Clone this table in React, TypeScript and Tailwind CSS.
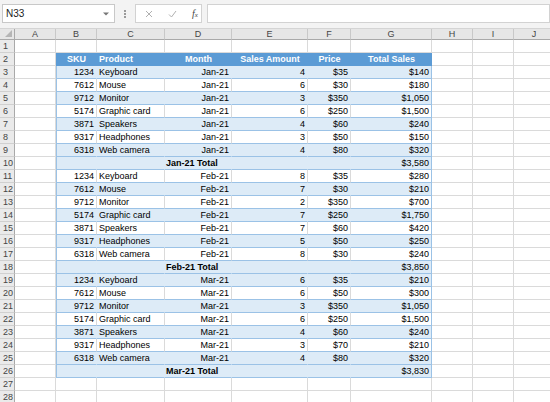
import React from "react";

type Row =
  | { kind: "empty" }
  | { kind: "head" }
  | { kind: "data"; sku: number; product: string; month: string; qty: number; price: string; total: string; band: boolean }
  | { kind: "total"; label: string; total: string };

const groups = [
  {
    month: "Jan-21",
    total: "$3,580",
    items: [
      [1234, "Keyboard", 4, "$35", "$140"],
      [7612, "Mouse", 6, "$30", "$180"],
      [9712, "Monitor", 3, "$350", "$1,050"],
      [5174, "Graphic card", 6, "$250", "$1,500"],
      [3871, "Speakers", 4, "$60", "$240"],
      [9317, "Headphones", 3, "$50", "$150"],
      [6318, "Web camera", 4, "$80", "$320"],
    ],
  },
  {
    month: "Feb-21",
    total: "$3,850",
    items: [
      [1234, "Keyboard", 8, "$35", "$280"],
      [7612, "Mouse", 7, "$30", "$210"],
      [9712, "Monitor", 2, "$350", "$700"],
      [5174, "Graphic card", 7, "$250", "$1,750"],
      [3871, "Speakers", 7, "$60", "$420"],
      [9317, "Headphones", 5, "$50", "$250"],
      [6318, "Web camera", 8, "$30", "$240"],
    ],
  },
  {
    month: "Mar-21",
    total: "$3,830",
    items: [
      [1234, "Keyboard", 6, "$35", "$210"],
      [7612, "Mouse", 6, "$50", "$300"],
      [9712, "Monitor", 3, "$350", "$1,050"],
      [5174, "Graphic card", 6, "$250", "$1,500"],
      [3871, "Speakers", 4, "$60", "$240"],
      [9317, "Headphones", 3, "$70", "$210"],
      [6318, "Web camera", 4, "$80", "$320"],
    ],
  },
] as const;

function buildRows(): Row[] {
  const rows: Row[] = [{ kind: "empty" }, { kind: "head" }];
  let n = 0;
  groups.forEach((g) => {
    g.items.forEach((it) => {
      rows.push({
        kind: "data",
        sku: it[0] as number,
        product: it[1] as string,
        month: g.month,
        qty: it[2] as number,
        price: it[3] as string,
        total: it[4] as string,
        band: n % 2 === 0,
      });
      n++;
    });
    rows.push({ kind: "total", label: `${g.month} Total`, total: g.total });
  });
  rows.push({ kind: "empty" }, { kind: "empty" });
  return rows;
}

const letters = ["A", "B", "C", "D", "E", "F", "G", "H", "I", "J"];

const grid = "grid grid-cols-[15px_41px_41px_68px_67px_76px_43px_81px_41px_41px_41px]";
const plain = "h-[13px] border-r border-b border-[#dadada] bg-white";

function RowNum({ n }: { n: number }) {
  return (
    <div className="h-[13px] border-r border-r-[#a9a9a9] border-b border-b-[#d0d0d0] bg-[#eaeaea] pl-[3px] text-[9px] leading-[12px] text-[#444]">
      {n}
    </div>
  );
}

function Blank() {
  return <div className={plain} />;
}

function Outside() {
  return (
    <>
      <Blank />
      <Blank />
      <Blank />
    </>
  );
}

function SheetRow({ row, n }: { row: Row; n: number }) {
  if (row.kind === "empty") {
    return (
      <div className={grid}>
        <RowNum n={n} />
        {letters.map((l) => (
          <Blank key={l} />
        ))}
      </div>
    );
  }
  if (row.kind === "head") {
    const c = "h-[13px] bg-[#5b9bd5] border-b border-[#5b9bd5] text-white font-bold text-[9px] leading-[12px] whitespace-nowrap";
    return (
      <div className={grid}>
        <RowNum n={n} />
        <Blank />
        <div className={`${c} text-center`}>SKU</div>
        <div className={`${c} pl-[2px]`}>Product</div>
        <div className={`${c} text-center`}>Month</div>
        <div className={`${c} text-center`}>Sales Amount</div>
        <div className={`${c} text-center`}>Price</div>
        <div className={`${c} text-center`}>Total Sales</div>
        <Outside />
      </div>
    );
  }
  const blue = row.kind === "total" || row.band;
  const base = `h-[13px] border-b border-b-[#9bc2e6] text-[9px] leading-[12px] text-black whitespace-nowrap ${
    blue ? "bg-[#ddebf7] border-r border-r-[#ddebf7]" : "bg-white border-r border-r-[#dadada]"
  }`;
  const last = `h-[13px] border-b border-b-[#9bc2e6] border-r border-r-[#9bc2e6] text-[9px] leading-[12px] text-black text-right pr-[2px] ${
    blue ? "bg-[#ddebf7]" : "bg-white"
  }`;
  if (row.kind === "total") {
    return (
      <div className={grid}>
        <RowNum n={n} />
        <Blank />
        <div className={`${base} border-l border-l-[#9bc2e6]`} />
        <div className={base} />
        <div className={`${base} font-bold pl-[1px] overflow-visible relative z-10`}>{row.label}</div>
        <div className={base} />
        <div className={base} />
        <div className={last}>{row.total}</div>
        <Outside />
      </div>
    );
  }
  return (
    <div className={grid}>
      <RowNum n={n} />
      <Blank />
      <div className={`${base} border-l border-l-[#9bc2e6] text-right pr-[2px]`}>{row.sku}</div>
      <div className={`${base} pl-[2px]`}>{row.product}</div>
      <div className={`${base} text-right pr-[2px]`}>{row.month}</div>
      <div className={`${base} text-right pr-[2px]`}>{row.qty}</div>
      <div className={`${base} text-right pr-[2px]`}>{row.price}</div>
      <div className={last}>{row.total}</div>
      <Outside />
    </div>
  );
}

export default function App() {
  const rows = buildRows();
  return (
    <div className="w-[550px] h-[402px] overflow-hidden bg-white font-['Liberation_Sans',Arial,sans-serif]">
      {/* formula bar */}
      <div className="h-[29px] bg-[#f3f3f3] border-b border-[#d4d4d4] flex items-start pt-[4px] pl-[2px]">
        <div className="w-[113px] h-[19px] bg-white border border-[#c8c8c8] flex items-center justify-between pl-[3px] pr-[5px]">
          <span className="text-[10px] text-[#222]">N33</span>
          <svg width="6" height="4" viewBox="0 0 6 4">
            <path d="M0 0.5 L6 0.5 L3 3.5 Z" fill="#777" />
          </svg>
        </div>
        <div className="w-[20px] h-[19px] flex flex-col items-center justify-center gap-[1px]">
          <span className="w-[2px] h-[2px] bg-[#9a9a9a]" />
          <span className="w-[2px] h-[2px] bg-[#9a9a9a]" />
          <span className="w-[2px] h-[2px] bg-[#9a9a9a]" />
        </div>
        <div className="w-[67px] h-[19px] bg-white border border-[#d2d2d2] flex items-center pl-[9px] gap-[15px]">
          <svg width="8" height="8" viewBox="0 0 8 8">
            <path d="M1 1 L7 7 M7 1 L1 7" stroke="#b0b0b0" strokeWidth="1" />
          </svg>
          <svg width="9" height="8" viewBox="0 0 9 8">
            <path d="M1 4.5 L3.5 7 L8 1" stroke="#b0b0b0" strokeWidth="1" fill="none" />
          </svg>
          <span className="text-[10px] italic text-[#444] font-['Liberation_Serif',serif] leading-none">
            f<span className="text-[7px]">x</span>
          </span>
        </div>
        <div className="ml-[5px] flex-1 h-[19px] bg-white border border-[#d2d2d2]" />
      </div>
      {/* column headers */}
      <div className={`${grid} h-[11px]`}>
        <div className="h-[11px] bg-[#e6e6e6] border-r border-b border-[#a9a9a9] relative">
          <svg className="absolute right-[2px] bottom-[2px]" width="7" height="7" viewBox="0 0 7 7">
            <path d="M7 0 L7 7 L0 7 Z" fill="#b5b5b5" />
          </svg>
        </div>
        {letters.map((l) => (
          <div
            key={l}
            className="h-[11px] bg-[#e6e6e6] border-r border-r-[#c8c8c8] border-b border-b-[#a9a9a9] text-center text-[9px] leading-[10px] text-[#444]"
          >
            {l}
          </div>
        ))}
      </div>
      {rows.map((r, i) => (
        <SheetRow key={i} row={r} n={i + 1} />
      ))}
    </div>
  );
}
